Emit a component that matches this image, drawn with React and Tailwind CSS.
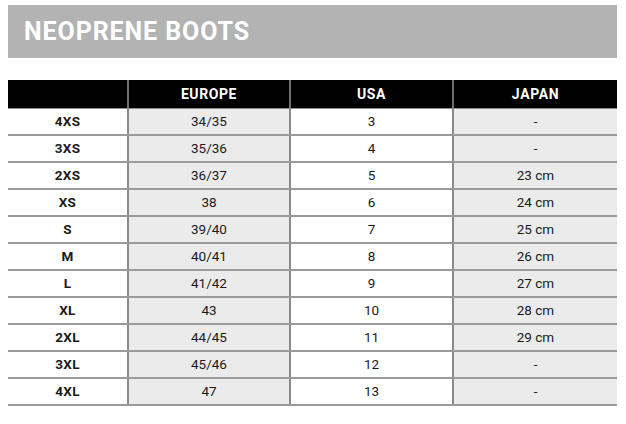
import React from 'react';

const rows = [
  ['4XS', '34/35', '3', '-'],
  ['3XS', '35/36', '4', '-'],
  ['2XS', '36/37', '5', '23 cm'],
  ['XS', '38', '6', '24 cm'],
  ['S', '39/40', '7', '25 cm'],
  ['M', '40/41', '8', '26 cm'],
  ['L', '41/42', '9', '27 cm'],
  ['XL', '43', '10', '28 cm'],
  ['2XL', '44/45', '11', '29 cm'],
  ['3XL', '45/46', '12', '-'],
  ['4XL', '47', '13', '-'],
];

const cols = 'grid grid-cols-[121px_162px_163px_163px]';

const App = () => {
  return (
    <div className="w-[626px] h-[424px] bg-white pt-[5px] pl-[8px]" style={{ fontFamily: 'Roboto, "Liberation Sans", sans-serif' }}>
      <div className="w-[609px] h-[53px] bg-[#b3b3b3] flex items-center pl-[16px]">
        <h1 className="text-white font-bold text-[25px] tracking-[0.9px] m-0 leading-none">NEOPRENE BOOTS</h1>
      </div>

      <div className="mt-[22px] w-[609px]">
        <div className={`${cols} h-[29px] bg-black border-b border-[#8a8a8a] text-white font-bold text-[14px] tracking-[0.6px]`}>
          <div className="border-r-2 border-[#6f6f6f]" />
          <div className="flex items-center justify-center border-r-2 border-[#6f6f6f]">EUROPE</div>
          <div className="flex items-center justify-center border-r-2 border-[#6f6f6f]">USA</div>
          <div className="flex items-center justify-center">JAPAN</div>
        </div>
        {rows.map(([size, eu, us, jp]) => (
          <div key={size} className={`${cols} h-[27px] border-b-2 border-[#9a9a9a] text-[13.5px] text-[#1a1a1a]`}>
            <div className="flex items-center justify-center font-bold bg-white border-r-2 border-[#8a8a8a] tracking-[0.3px]">{size}</div>
            <div className="flex items-center justify-center bg-[#ebebeb] border-r-2 border-[#8a8a8a]">{eu}</div>
            <div className="flex items-center justify-center bg-white border-r-2 border-[#8a8a8a]">{us}</div>
            <div className="flex items-center justify-center bg-[#ebebeb]">{jp}</div>
          </div>
        ))}
      </div>
    </div>
  );
};

export default App;
